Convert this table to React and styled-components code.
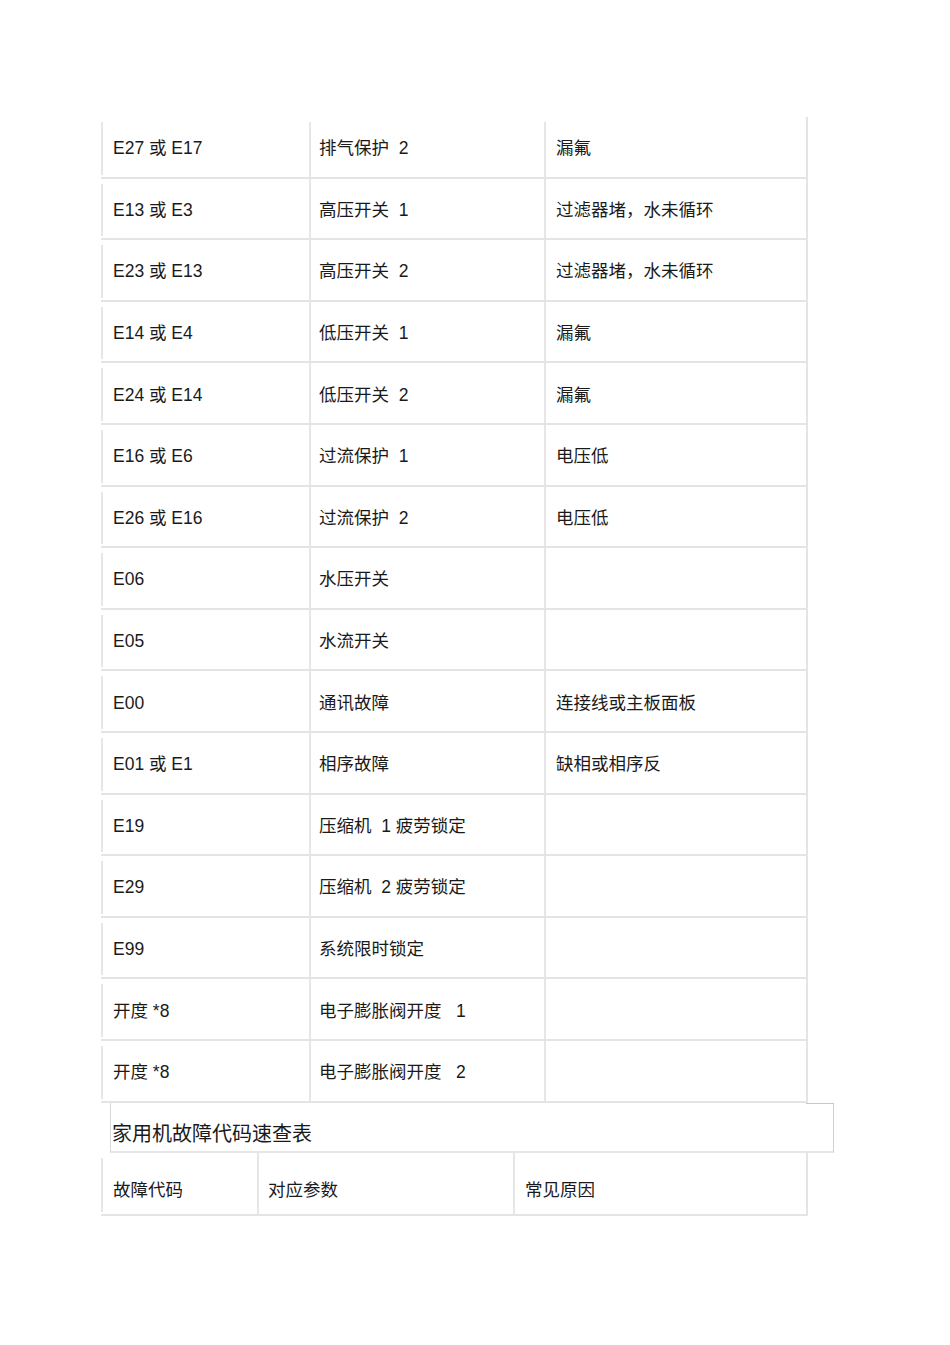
import React from 'react';
import styled, { createGlobalStyle } from 'styled-components';

const GlobalStyle = createGlobalStyle`
  body {
    margin: 0;
    background: #fff;
    font-family: "Liberation Sans", "Noto Sans CJK SC", sans-serif;
    color: #1a1a1a;
  }
`;

const Page = styled.div`
  width: 950px;
  height: 1345px;
  padding-top: 117px;
  padding-left: 101px;
  box-sizing: border-box;
`;

const Table = styled.div`
  width: 707px;
  display: flex;
  flex-direction: column;
`;

const Row = styled.div`
  display: grid;
  grid-template-columns: ${p => p.cols};
  height: ${p => p.h}px;
  border-bottom: 2px solid #e4e4e4;
  border-right: 2px solid #e4e4e4;
  box-sizing: border-box;
  position: relative;
  &::before {
    content: '';
    position: absolute;
    left: 0;
    top: 5px;
    bottom: 2px;
    width: 2px;
    background: #e6e6e6;
  }
`;

const Cell = styled.div`
  display: flex;
  align-items: center;
  padding-left: ${p => p.pad}px;
  padding-top: ${p => p.top || 0}px;
  font-size: 17.5px;
  line-height: 22px;
  white-space: pre;
  box-sizing: border-box;
  position: relative;
  &::before {
    content: '';
    display: ${p => (p.first ? 'none' : 'block')};
    position: absolute;
    left: 0;
    top: ${p => p.lineTop || 0}px;
    bottom: 0;
    width: 2px;
    background: #e6e6e6;
  }
`;

const TitleRow = styled.div`
  width: 724px;
  height: 50px;
  margin-left: 9px;
  border-left: 1px solid #d8d8d8;
  border-right: 1px solid #d0d0d0;
  border-bottom: 2px solid #e6e6e6;
  box-sizing: border-box;
  display: flex;
  align-items: center;
  padding-left: 1px;
  padding-top: 12px;
  font-size: 20px;
  font-family: "Noto Sans CJK SC", sans-serif;
  position: relative;
  &::before {
    content: '';
    position: absolute;
    right: -1px;
    top: 0;
    width: 28px;
    height: 1px;
    background: #c8c8c8;
  }
`;

const rows = [
  ['E27 或 E17', '排气保护  2', '漏氟'],
  ['E13 或 E3', '高压开关  1', '过滤器堵，水未循环'],
  ['E23 或 E13', '高压开关  2', '过滤器堵，水未循环'],
  ['E14 或 E4', '低压开关  1', '漏氟'],
  ['E24 或 E14', '低压开关  2', '漏氟'],
  ['E16 或 E6', '过流保护  1', '电压低'],
  ['E26 或 E16', '过流保护  2', '电压低'],
  ['E06', '水压开关', ''],
  ['E05', '水流开关', ''],
  ['E00', '通讯故障', '连接线或主板面板'],
  ['E01 或 E1', '相序故障', '缺相或相序反'],
  ['E19', '压缩机  1 疲劳锁定', ''],
  ['E29', '压缩机  2 疲劳锁定', ''],
  ['E99', '系统限时锁定', ''],
  ['开度 *8', '电子膨胀阀开度   1', ''],
  ['开度 *8', '电子膨胀阀开度   2', ''],
];

export default function App() {
  return (
    <>
      <GlobalStyle />
      <Page>
        <Table>
          {rows.map((r, i) => (
            <Row key={i} cols="208px 235px 1fr" h={61.6}>
              <Cell first pad={12} top={3}>{r[0]}</Cell>
              <Cell pad={10} top={3} lineTop={i === 0 ? 5 : 0}>{r[1]}</Cell>
              <Cell pad={12} top={3} lineTop={i === 0 ? 5 : 0}>{r[2]}</Cell>
            </Row>
          ))}
          <TitleRow>家用机故障代码速查表</TitleRow>
          <Row cols="156px 256px 1fr" h={63}>
            <Cell first pad={12} top={13}>故障代码</Cell>
            <Cell pad={11} top={13}>对应参数</Cell>
            <Cell pad={12} top={13}>常见原因</Cell>
          </Row>
        </Table>
      </Page>
    </>
  );
}
